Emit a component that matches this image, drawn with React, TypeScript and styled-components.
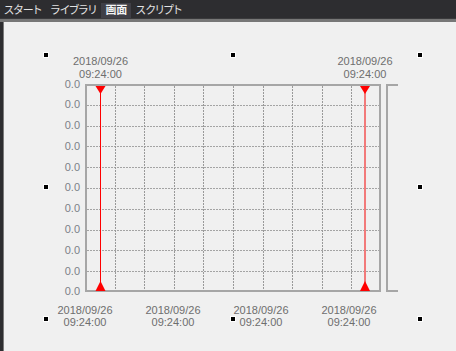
import styled, { createGlobalStyle } from 'styled-components';

const GlobalStyle = createGlobalStyle`
    html, body {
        margin: 0;
        padding: 0;
        width: 456px;
        height: 351px;
        overflow: hidden;
        background: #2d2d30;
    }
    #root {
        height: 100%;
    }
`;

const PLOT_W = 296;
const PLOT_H = 208;
const COLS = 10;
const ROWS = 10;
const STAMP = ['2018/09/26', '09:24:00'];
const cursors = [15.5, 280];
const bottomTicks = [0, 1, 2, 3];

const Window = styled.div`
    display: flex;
    flex-direction: column;
    height: 100%;
    font-family: "Liberation Sans", Arial, sans-serif;
`;

const TabBar = styled.div`
    display: flex;
    align-items: stretch;
    height: 19px;
    padding: 3px 0 0 0;
    box-sizing: border-box;
    background: #2d2d30;
    border-bottom: 1px solid #3a3a3c;
`;

const Tab = styled.div<{ $active?: boolean }>`
    display: flex;
    align-items: center;
    padding: 0 4px 2px;
    margin-right: 1px;
    font-family: "Noto Sans CJK JP", sans-serif;
    font-feature-settings: "palt";
    font-size: 11px;
    letter-spacing: -0.3px;
    font-weight: ${p => (p.$active ? 700 : 400)};
    color: ${p => (p.$active ? '#f4f4f4' : '#e2e2e2')};
    background: ${p => (p.$active ? '#3f3f46' : 'transparent')};
    line-height: 1;
`;

const Body = styled.div`
    flex: 1;
    display: flex;
    border-top: 3px solid #777777;
`;

const SideStrip = styled.div`
    width: 3px;
    background: #2d2d30;
`;

const Canvas = styled.div`
    flex: 1;
    position: relative;
    background: #f0f0f0;
    border-left: 1px solid #7a7a7a;
`;

const Widget = styled.div`
    position: absolute;
    left: 42px;
    top: 33px;
    width: 374px;
    height: 264px;
    font-size: 11px;
    color: #6e6e6e;
`;

const Handle = styled.div<{ $x: string; $y: string }>`
    position: absolute;
    left: ${p => p.$x};
    top: ${p => p.$y};
    width: 4px;
    height: 4px;
    margin: -3px 0 0 -3px;
    background: #000;
    border: 1px solid #fff;
`;

const TopLabels = styled.div`
    position: relative;
    height: 29px;
    margin-left: 39px;
    width: ${PLOT_W}px;
`;

const Stamp = styled.div`
    line-height: 12.5px;
    text-align: center;
    white-space: nowrap;
`;

const CursorStamp = styled(Stamp)`
    position: absolute;
    top: 0;
    transform: translateX(-50%);
`;

const Middle = styled.div`
    display: flex;
    align-items: flex-start;
`;

const YAxis = styled.div`
    width: 34px;
    height: ${PLOT_H + 13}px;
    margin: -6.5px 5px 0 0;
    display: flex;
    flex-direction: column;
    justify-content: space-between;
    align-items: flex-end;
    line-height: 13px;
    color: #7c8088;
`;

const Plot = styled.svg`
    display: block;
    flex: none;
`;

const Bracket = styled.svg`
    display: block;
    margin-left: 5px;
`;

const BottomLabels = styled.div`
    display: flex;
    margin: 5px 0 0 -5px;
`;

const TickCell = styled(Stamp)`
    width: 88px;
`;

function StampText() {
    return (
        <>
            {STAMP[0]}
            <br />
            {STAMP[1]}
        </>
    );
}

function PlotArea() {
    const colStep = PLOT_W / COLS;
    const rowStep = PLOT_H / ROWS;
    return (
        <Plot width={PLOT_W} height={PLOT_H} viewBox={`0 0 ${PLOT_W} ${PLOT_H}`}>
            {Array.from({ length: ROWS - 1 }, (_, i) => (
                <line
                    key={'h' + i}
                    x1={2}
                    x2={PLOT_W - 2}
                    y1={Math.round((i + 1) * rowStep) + 0.5}
                    y2={Math.round((i + 1) * rowStep) + 0.5}
                    stroke="#a4a4a4"
                    strokeDasharray="2 1"
                />
            ))}
            {Array.from({ length: COLS - 1 }, (_, i) => (
                <line
                    key={'v' + i}
                    x1={Math.round((i + 1) * colStep) + 0.5}
                    x2={Math.round((i + 1) * colStep) + 0.5}
                    y1={2}
                    y2={PLOT_H - 2}
                    stroke="#999999"
                    strokeDasharray="2 1"
                />
            ))}
            <rect x={1} y={1} width={PLOT_W - 2} height={PLOT_H - 2} fill="none" stroke="#a6a6a6" strokeWidth={2} />
            {cursors.map((x, i) => (
                <g key={i}>
                    <line
                        x1={x}
                        x2={x}
                        y1={2}
                        y2={PLOT_H - 2}
                        stroke={i === 0 ? '#ff0000' : '#f27a7a'}
                        strokeWidth={i === 0 ? 1 : 2}
                    />
                    <polygon points={`${x - 5},2 ${x + 5},2 ${x},10`} fill="#ff0000" />
                    <polygon points={`${x - 5},${PLOT_H - 1} ${x + 5},${PLOT_H - 1} ${x},${PLOT_H - 11}`} fill="#ff0000" />
                </g>
            ))}
        </Plot>
    );
}

export default function App() {
    return (
        <Window>
            <GlobalStyle />
            <TabBar>
                <Tab>スタート</Tab>
                <Tab>ライブラリ</Tab>
                <Tab $active>画面</Tab>
                <Tab>スクリプト</Tab>
            </TabBar>
            <Body>
                <SideStrip />
                <Canvas>
                    <Widget>
                        <TopLabels>
                            {cursors.map((x, i) => (
                                <CursorStamp key={i} style={{ left: x }}>
                                    <StampText />
                                </CursorStamp>
                            ))}
                        </TopLabels>
                        <Middle>
                            <YAxis>
                                {Array.from({ length: ROWS + 1 }, (_, i) => (
                                    <span key={i}>0.0</span>
                                ))}
                            </YAxis>
                            <PlotArea />
                            <Bracket width={12} height={PLOT_H} viewBox={`0 0 12 ${PLOT_H}`}>
                                <path d={`M12 1 H1 V${PLOT_H - 1} H12`} fill="none" stroke="#a6a6a6" strokeWidth={2} />
                            </Bracket>
                        </Middle>
                        <BottomLabels>
                            {bottomTicks.map(t => (
                                <TickCell key={t}>
                                    <StampText />
                                </TickCell>
                            ))}
                        </BottomLabels>
                        {['0%', '50%', '100%'].map(x =>
                            ['0%', '50%', '100%'].map(y =>
                                x === '50%' && y === '50%' ? null : <Handle key={x + y} $x={x} $y={y} />
                            )
                        )}
                    </Widget>
                </Canvas>
            </Body>
        </Window>
    );
}
